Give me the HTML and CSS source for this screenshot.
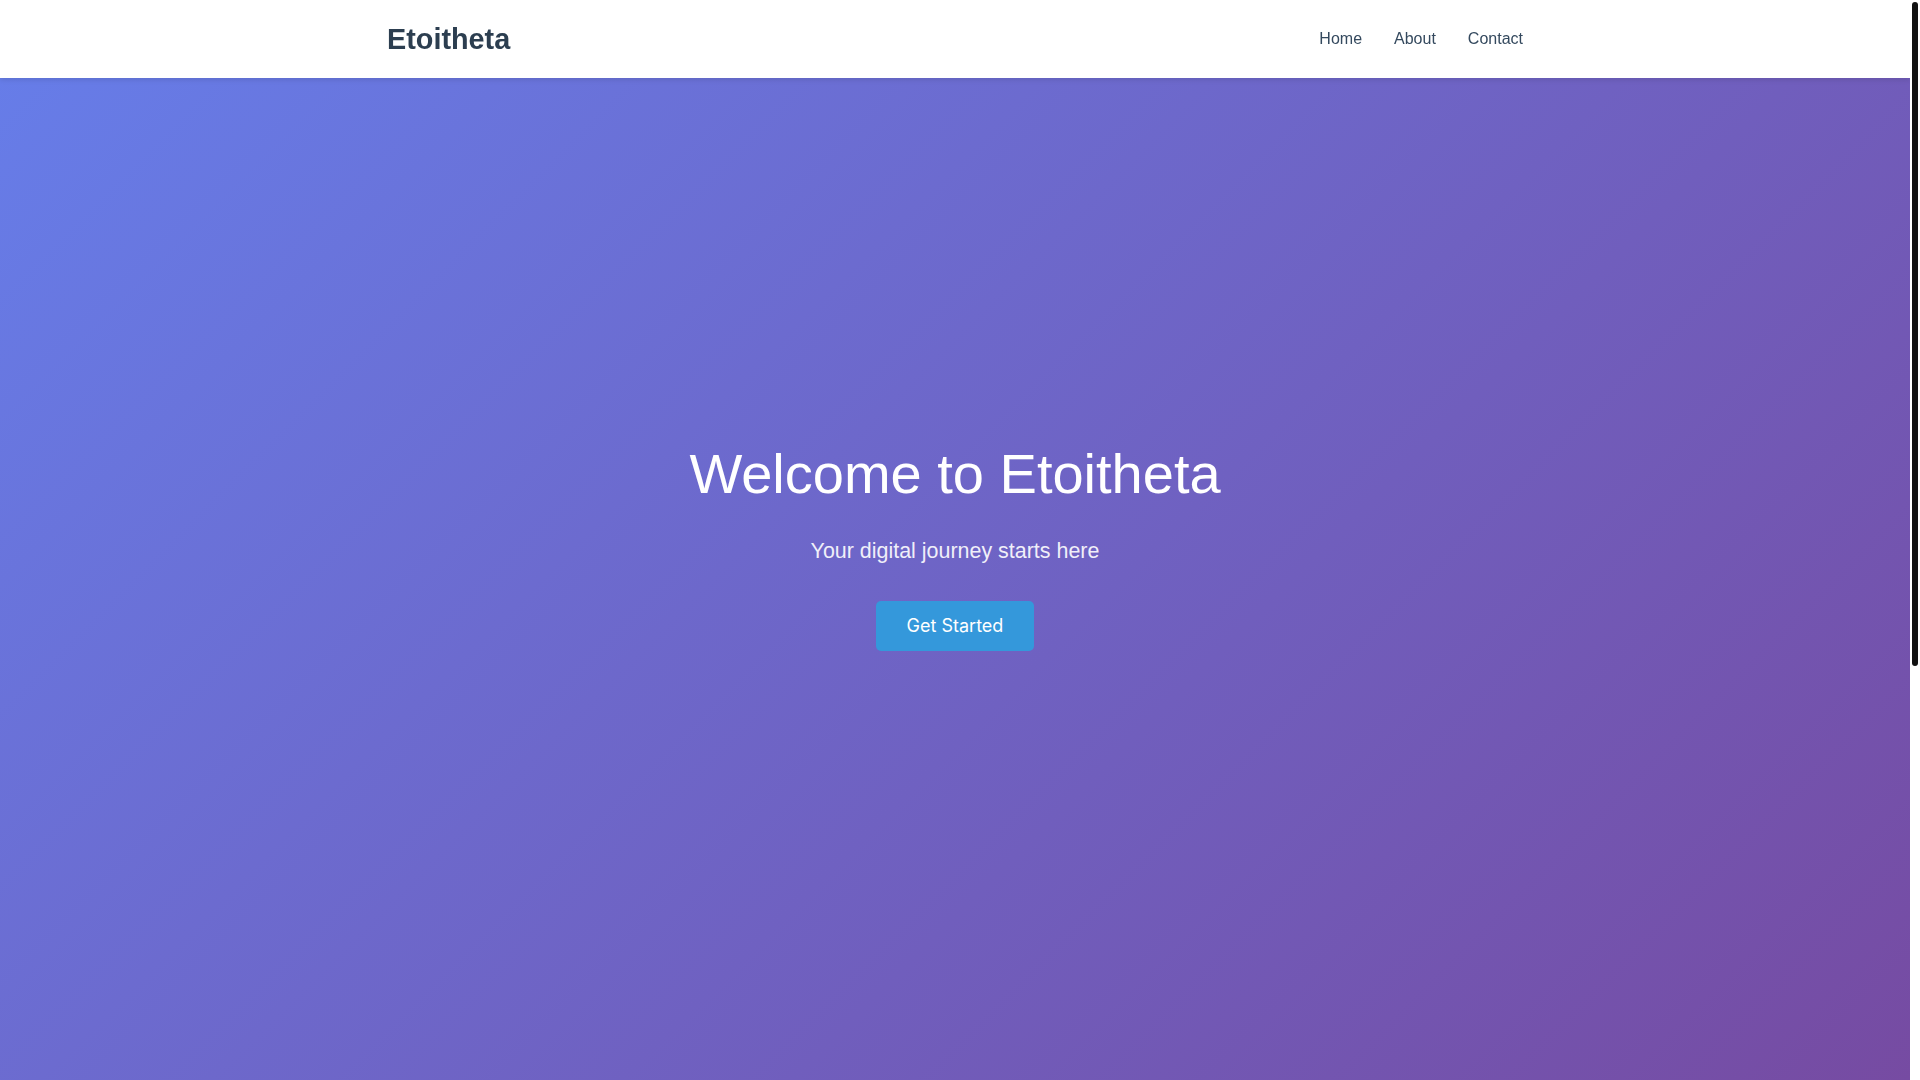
FILE: index.html
```html
<!DOCTYPE html>
<html lang="en">
<head>
    <meta charset="UTF-8">
    <title>Etoitheta</title>
    <link rel="stylesheet" href="styles.css">
</head>
<body>

<div class="page">

    <!-- 顶部导航 -->
    <header class="header">
        <div class="container nav-bar">
            <a href="#" class="logo">Etoitheta</a>
            <nav class="nav">
                <a href="#home">Home</a>
                <a href="#about">About</a>
                <a href="#contact">Contact</a>
            </nav>
        </div>
    </header>

    <!-- 首屏 -->
    <section class="hero" id="home">
        <div class="hero-content">
            <h1>Welcome to Etoitheta</h1>
            <p>Your digital journey starts here</p>
            <a href="#about" class="btn">Get Started</a>
        </div>
    </section>

</div>

<!-- 右侧滚动条轨道 -->
<div class="rail" aria-hidden="true"><span class="rail-thumb"></span></div>

</body>
</html>
```

FILE: styles.css
```css
*{
    margin: 0;
    padding: 0;
    box-sizing: border-box;
}
html, body{
    height: 100%;
    overflow: hidden;
}
body{
    font-family: "Liberation Sans", Arial, sans-serif;
    line-height: 1.6;
    color: #333;
    background-color: #fff;
}
/* 滚动容器，右边留出10px给滚动条 */
.page{
    height: 100vh;
    overflow-y: auto;
    margin-right: 10px;
    scrollbar-width: none;
}
.page::-webkit-scrollbar{
    display: none;
}
.rail{
    position: fixed;
    top: 0;
    right: 0;
    width: 10px;
    height: 100%;
    background-color: #fff;
    z-index: 20;
}
.rail-thumb{
    display: block;
    margin: 2px 2px 0;
    width: 6px;
    height: 664px;
    background-color: #111;
    border-radius: 3px;
}
.container{
    max-width: 1200px;
    margin: 0 auto;
    padding: 0 2rem;
}
/* 固定在顶部的导航栏 */
.header{
    position: fixed;
    top: 0;
    left: 0;
    right: 10px;
    background-color: #fff;
    box-shadow: 0 2px 5px rgba(0,0,0,0.1);
    padding: 1rem 0;
    z-index: 10;
}
.nav-bar{
    display: flex;
    justify-content: space-between;
    align-items: center;
}
.logo{
    font-size: 1.8rem;
    font-weight: bold;
    color: #2c3e50;
    text-decoration: none;
}
.nav{
    display: flex;
    gap: 2rem;
}
.nav a{
    color: #34495e;
    text-decoration: none;
    font-size: 1rem;
}
.nav a:hover{
    color: #3498db;
}
/* 首屏渐变 */
.hero{
    min-height: 100vh;
    display: flex;
    align-items: center;
    justify-content: center;
    text-align: center;
    color: #fff;
    background: linear-gradient(135deg, #667eea 0%, #764ba2 100%);
}
.hero h1{
    font-size: 3.5rem;
    font-weight: normal;
    margin-bottom: 1rem;
}
.hero p{
    font-size: 1.34rem;
    margin-bottom: 2rem;
    opacity: 0.9;
}
.btn{
    display: inline-block;
    font-family: Inter, "Noto Sans", sans-serif;
    font-size: 18px;
    color: #fff;
    background-color: #3498db;
    padding: 11px 31px;
    border-radius: 5px;
    text-decoration: none;
}
.btn:hover{
    background-color: #2980b9;
}
```
